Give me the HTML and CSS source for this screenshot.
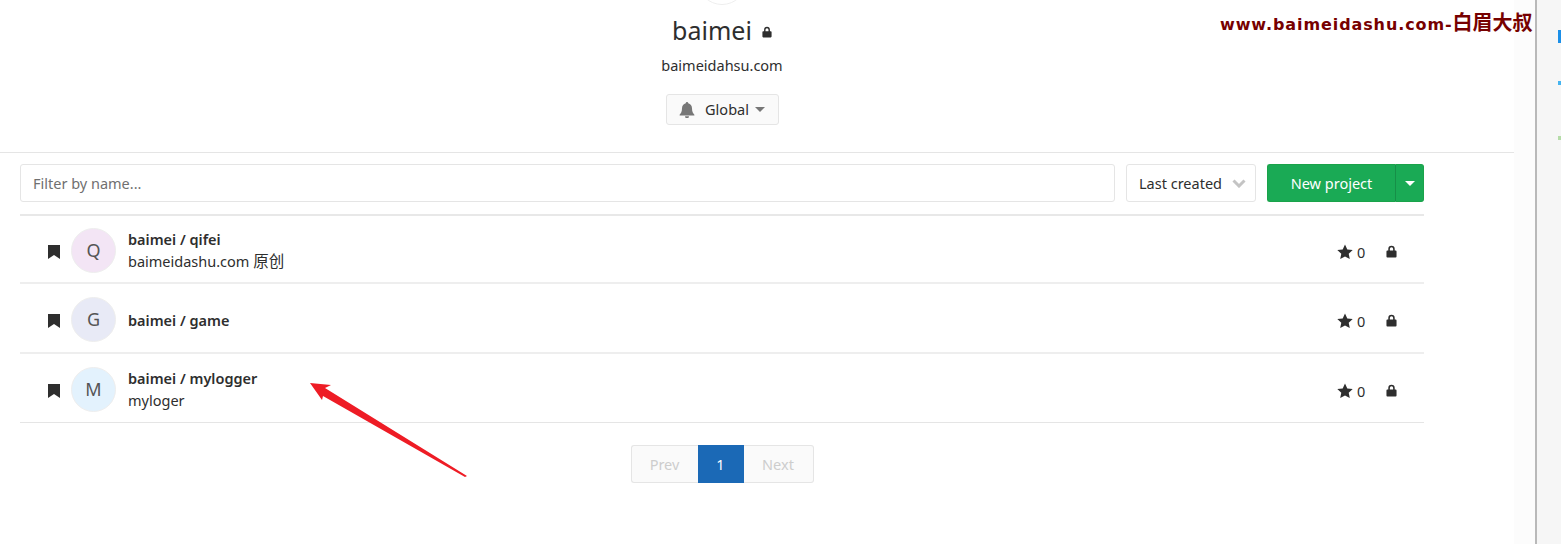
FILE: index.html
```html
<!DOCTYPE html>
<html lang="en">
<head>
    <meta charset="UTF-8">
    <title>baimei</title>
    <link rel="stylesheet" href="styles.css">
</head>
<body>
    <div class="page">
        <main class="content">
            <header class="profile">
                <div class="profile-avatar-clip"><div class="profile-avatar"></div></div>
                <h1 class="group-name">baimei
                    <svg class="lock-small" viewBox="0 0 12 14"><path d="M2.500 6V4.200a3.500 3.500 0 0 1 7 0V6h1a1 1 0 0 1 1 1v5.500a1 1 0 0 1-1 1h-9a1 1 0 0 1-1-1V7a1 1 0 0 1 1-1zM4.200 6h3.600V4.200a1.800 1.800 0 0 0-3.600 0z"/></svg>
                </h1>
                <p class="group-desc">baimeidahsu.com</p>
                <button class="notify-btn">
                    <svg class="bell" viewBox="0 0 16 16"><path d="M8 0a1.200 1.200 0 0 1 1.200 1.300C11.500 1.800 13 3.700 13 6.300c0 3.700 1 5 2.400 6.400v.8H.6v-.8C2 11.300 3 10 3 6.300c0-2.600 1.500-4.500 3.800-5A1.200 1.200 0 0 1 8 0zM6 14.300h4a2 2 0 0 1-4 0z"/></svg>
                    <span class="notify-label">Global</span>
                    <span class="caret caret-grey"></span>
                </button>
            </header>

            <div class="toolbar">
                <div class="filter-input">Filter by name...</div>
                <div class="sort-select">
                    <span>Last created</span>
                    <svg class="chevron" viewBox="0 0 14 9"><path d="M1.500 1.500 7 7l5.500-5.500" /></svg>
                </div>
                <div class="btn-group">
                    <button class="btn-new">New project</button>
                    <button class="btn-drop"><span class="caret caret-white"></span></button>
                </div>
            </div>

            <ul class="project-list">
                <li class="project row-first">
                    <svg class="bookmark" viewBox="0 0 12 14"><path d="M0 0h12v14L6 10l-6 4z"/></svg>
                    <div class="avatar avatar-q">Q</div>
                    <div class="project-text">
                        <div class="project-name">baimei / qifei</div>
                        <div class="project-desc">baimeidashu.com <span class="desc-cn">原创</span></div>
                    </div>
                    <div class="project-stats">
                        <svg class="star" viewBox="0 0 16 16"><path d="M8 .4l2.300 5 5.400.6-4 3.700 1.100 5.400L8 12.400l-4.800 2.700 1.100-5.400-4-3.700 5.400-.6z"/></svg>
                        <span class="star-count">0</span>
                        <svg class="lock" viewBox="0 0 12 14"><path d="M2.500 6V4.200a3.500 3.500 0 0 1 7 0V6h1a1 1 0 0 1 1 1v5.500a1 1 0 0 1-1 1h-9a1 1 0 0 1-1-1V7a1 1 0 0 1 1-1zM4.200 6h3.600V4.200a1.800 1.800 0 0 0-3.600 0z"/></svg>
                    </div>
                </li>
                <li class="project row-mid">
                    <svg class="bookmark" viewBox="0 0 12 14"><path d="M0 0h12v14L6 10l-6 4z"/></svg>
                    <div class="avatar avatar-g">G</div>
                    <div class="project-text name-only">
                        <div class="project-name">baimei / game</div>
                    </div>
                    <div class="project-stats">
                        <svg class="star" viewBox="0 0 16 16"><path d="M8 .4l2.300 5 5.400.6-4 3.700 1.100 5.400L8 12.400l-4.800 2.700 1.100-5.400-4-3.700 5.400-.6z"/></svg>
                        <span class="star-count">0</span>
                        <svg class="lock" viewBox="0 0 12 14"><path d="M2.500 6V4.200a3.500 3.500 0 0 1 7 0V6h1a1 1 0 0 1 1 1v5.500a1 1 0 0 1-1 1h-9a1 1 0 0 1-1-1V7a1 1 0 0 1 1-1zM4.200 6h3.600V4.200a1.800 1.800 0 0 0-3.600 0z"/></svg>
                    </div>
                </li>
                <li class="project row-last">
                    <svg class="bookmark" viewBox="0 0 12 14"><path d="M0 0h12v14L6 10l-6 4z"/></svg>
                    <div class="avatar avatar-m">M</div>
                    <div class="project-text">
                        <div class="project-name">baimei / mylogger</div>
                        <div class="project-desc">myloger</div>
                    </div>
                    <div class="project-stats">
                        <svg class="star" viewBox="0 0 16 16"><path d="M8 .4l2.300 5 5.400.6-4 3.700 1.100 5.400L8 12.400l-4.800 2.700 1.100-5.400-4-3.700 5.400-.6z"/></svg>
                        <span class="star-count">0</span>
                        <svg class="lock" viewBox="0 0 12 14"><path d="M2.500 6V4.200a3.500 3.500 0 0 1 7 0V6h1a1 1 0 0 1 1 1v5.500a1 1 0 0 1-1 1h-9a1 1 0 0 1-1-1V7a1 1 0 0 1 1-1zM4.200 6h3.600V4.200a1.800 1.800 0 0 0-3.600 0z"/></svg>
                    </div>
                </li>
            </ul>

            <nav class="pagination">
                <span class="page-item page-prev">Prev</span>
                <span class="page-item page-current">1</span>
                <span class="page-item page-next">Next</span>
            </nav>
        </main>
        <div class="gutter"></div>
        <aside class="side-rail">
            <span class="rail-mark rail-blue"></span>
            <span class="rail-mark rail-sky"></span>
            <span class="rail-mark rail-green"></span>
        </aside>
    </div>

    <!-- annotations pasted on top of the screenshot -->
    <div class="watermark">www.baimeidashu.com-<span class="watermark-cn">白眉大叔</span></div>
    <svg class="arrow" viewBox="0 0 160 100"><path d="M0 0 21 2 15 5 157 93 155 94 13 13 12 17z"/></svg>
</body>
</html>
```

FILE: styles.css
```css
* {
    box-sizing: border-box;
}
html, body {
    height: 100%;
}
body {
    margin: 0;
    background: #fff;
    color: #2e2e2e;
    font-family: "Noto Sans", "Noto Sans CJK SC", sans-serif;
    font-size: 14.5px;
    overflow: hidden;
    position: relative;
}
button {
    font-family: inherit;
    cursor: pointer;
}
.page {
    display: flex;
    height: 544px;
}
.content {
    width: 1514px;
    flex: none;
}
.gutter {
    width: 21px;
    flex: none;
    background: #fcfcfc;
}
.side-rail {
    flex: 1;
    background: #f6f6f6;
    border-left: 2px solid #b9b9b9;
    position: relative;
}
.rail-mark {
    position: absolute;
    right: 0;
    width: 3px;
}
.rail-blue {
    top: 30px;
    height: 13px;
    background: #1b8fe8;
}
.rail-sky {
    top: 81px;
    height: 4px;
    background: #45b4f0;
}
.rail-green {
    top: 136px;
    height: 4px;
    background: #b5dca8;
}

/* profile header */
.profile {
    height: 153px;
    padding-right: 70px;
    border-bottom: 1px solid #e5e5e5;
    display: flex;
    flex-direction: column;
    align-items: center;
}
.profile-avatar-clip {
    width: 50px;
    height: 5px;
    overflow: hidden;
}
.profile-avatar {
    width: 50px;
    height: 50px;
    margin-top: -45px;
    border-radius: 50%;
    border: 1px solid #eee;
    background: #fff;
}
.group-name {
    margin: 8px 0 0;
    height: 34px;
    line-height: 34px;
    font-size: 25px;
    font-weight: 400;
    display: flex;
    align-items: center;
    gap: 10px;
}
.lock-small {
    width: 10px;
    height: 12px;
    margin-top: 4px;
    fill: #2e2e2e;
}
.group-desc {
    margin: 8px 0 0;
    line-height: 20px;
}
.notify-btn {
    margin-top: 19px;
    width: 113px;
    height: 31px;
    background: #fafafa;
    border: 1px solid #e5e5e5;
    border-radius: 3px;
    color: #2e2e2e;
    font-size: 14.5px;
    display: flex;
    align-items: center;
    justify-content: center;
    gap: 6px;
    padding: 0;
}
.notify-label {
    margin-top: -2px;
}
.bell {
    width: 16px;
    height: 16px;
    margin-right: 4px;
    fill: #777;
}
.caret {
    width: 0;
    height: 0;
    border-left: 5px solid transparent;
    border-right: 5px solid transparent;
}
.caret-grey {
    border-top: 5px solid #777;
}
.caret-white {
    border-top: 5px solid #fff;
}

/* filter bar */
.toolbar {
    width: 1404px;
    margin: 11px 0 0 20px;
    display: flex;
    height: 38px;
}
.filter-input {
    width: 1095px;
    border: 1px solid #e5e5e5;
    border-radius: 3px;
    color: #707070;
    padding-left: 12px;
    display: flex;
    align-items: center;
}
.sort-select {
    width: 130px;
    margin-left: 11px;
    border: 1px solid #e5e5e5;
    border-radius: 3px;
    padding: 0 9px 0 12px;
    display: flex;
    align-items: center;
    justify-content: space-between;
}
.chevron {
    width: 14px;
    height: 9px;
    fill: none;
    stroke: #c4c4c4;
    stroke-width: 3;
}
.btn-group {
    margin-left: 11px;
    display: flex;
    flex: 1;
}
.btn-new, .btn-drop {
    border: 1px solid #1aa34a;
    background: #1aaa55;
    color: #fff;
    font-size: 14.5px;
    padding: 0;
}
.btn-new {
    width: 129px;
    border-radius: 3px 0 0 3px;
    border-right-color: #168f48;
}
.btn-drop {
    flex: 1;
    border-left: 0;
    border-radius: 0 3px 3px 0;
    display: flex;
    align-items: center;
    justify-content: center;
}

/* project rows */
.project-list {
    list-style: none;
    width: 1404px;
    margin: 12px 0 0 20px;
    padding: 0;
    border-top: 2px solid #e8e8e8;
}
.project {
    display: flex;
    align-items: center;
    padding: 2px 0 0 28px;
}
.row-first {
    height: 68px;
    border-bottom: 2px solid #eee;
}
.row-mid {
    height: 70px;
    border-bottom: 2px solid #eee;
}
.row-last {
    height: 69px;
    border-bottom: 1px solid #e5e5e5;
}
.bookmark {
    width: 12px;
    height: 14px;
    margin-top: 3px;
    fill: #2e2e2e;
    flex: none;
}
.avatar {
    width: 45px;
    height: 45px;
    margin-left: 11px;
    flex: none;
    border-radius: 50%;
    border: 1px solid #eee;
    color: #555;
    font-size: 18px;
    display: flex;
    align-items: center;
    justify-content: center;
}
.avatar-q {
    background: #f3e5f5;
}
.avatar-g {
    background: #e8eaf6;
}
.avatar-m {
    background: #e3f2fd;
}
.project-text {
    margin-left: 12px;
    flex: 1;
    line-height: 22px;
}
.name-only {
    padding-top: 2px;
}
.project-name {
    font-weight: 600;
}
.project-desc {
    height: 22px;
}
.desc-cn {
    font-size: 15.5px;
}
.project-stats {
    display: flex;
    align-items: center;
    margin: 3px 27px 0 0;
}
.star {
    width: 16px;
    height: 16px;
    fill: #2e2e2e;
}
.star-count {
    margin-left: 4px;
    width: 9px;
}
.lock {
    width: 11px;
    height: 13px;
    margin-left: 20px;
    fill: #2e2e2e;
}

/* pagination */
.pagination {
    display: flex;
    justify-content: center;
    margin-top: 22px;
    width: 1444px;
}
.page-item {
    height: 38px;
    display: flex;
    align-items: center;
    justify-content: center;
}
.page-prev, .page-next {
    background: #fafafa;
    color: #cdcdcd;
    border: 1px solid #e5e5e5;
}
.page-prev {
    width: 67px;
    border-radius: 3px 0 0 3px;
    border-right: 0;
}
.page-next {
    width: 70px;
    border-radius: 0 3px 3px 0;
    border-left: 0;
}
.page-current {
    width: 46px;
    background: #1b69b6;
    color: #fff;
}

/* annotations */
.watermark {
    position: absolute;
    top: 12px;
    left: 1220px;
    width: 312px;
    color: #770000;
    font-family: "DejaVu Sans", "Noto Sans CJK SC", sans-serif;
    font-size: 16px;
    font-weight: 700;
    letter-spacing: 0.9px;
    line-height: 22px;
    white-space: nowrap;
}
.watermark-cn {
    font-size: 20px;
    letter-spacing: 0;
}
.arrow {
    position: absolute;
    left: 310px;
    top: 383px;
    width: 160px;
    height: 100px;
    fill: #ee1c25;
}
```
